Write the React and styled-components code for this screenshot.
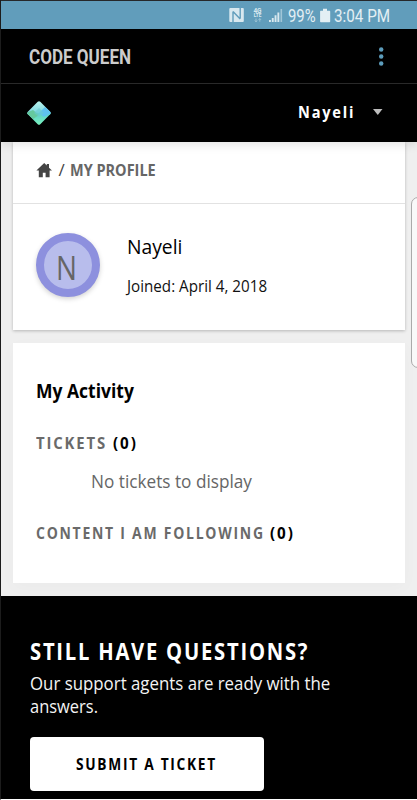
import React from "react";
import styled, { createGlobalStyle } from "styled-components";

const Global = createGlobalStyle`
  * { box-sizing: border-box; }
  body { margin: 0; background: #fff; }
`;

const sans = `"Open Sans", "Noto Sans", sans-serif`;
const roboto = `Roboto, "Liberation Sans", sans-serif`;

/* Single-line text, condensed horizontally by $fit. */
const Label = styled.span`
  display: block;
  flex: none;
  white-space: pre;
  transform-origin: 0 50%;
  transform: scaleX(${(p) => p.$fit || 1});
  font-family: ${(p) => (p.$roboto ? roboto : sans)};
  font-size: ${(p) => p.$size}px;
  font-weight: ${(p) => p.$weight || 400};
  letter-spacing: ${(p) => p.$track || 0}px;
  line-height: ${(p) => p.$line || 24}px;
  height: ${(p) => p.$line || 24}px;
  width: ${(p) => (p.$width ? `${p.$width}px` : "auto")};
  color: ${(p) => p.$color || "#000"};
`;

const Phone = styled.div`
  position: relative;
  display: flex;
  flex-direction: column;
  width: 417px;
  height: 800px;
  overflow: hidden;
  background: #efefef;
  border-left: 1px solid #1c1c1c;
  border-bottom: 1px solid #fff;
`;
const StatusBar = styled.div`
  display: flex;
  height: 29px;
  flex: none;
  background: #619dbb;
  border-top: 1px solid #26282a;
  align-items: center;
  padding: 2px 0 0 228px;
`;
const AppBar = styled.div`
  display: flex;
  flex: none;
  height: 55px;
  background: #000;
  border-bottom: 1px solid #2b2b2b;
  justify-content: space-between;
  align-items: center;
  padding: 3px 33px 0 28px;
`;
const Header = styled.div`
  display: flex;
  flex: none;
  height: 58px;
  background: #000;
  align-items: center;
  padding: 0 34px 0 25px;
  position: relative;
  box-shadow: 0 2px 10px rgba(0, 0, 0, 0.12);
`;
const UserMenu = styled.div`
  display: flex;
  align-items: center;
  margin-left: auto;
  padding-bottom: 2px;
`;
const Content = styled.main`
  display: flex;
  flex-direction: column;
  gap: 13px;
  flex: none;
  height: 454px;
  padding: 0 12px;
`;
const Card = styled.section`
  background: #fff;
  height: ${(p) => p.$h}px;
  flex: none;
  box-shadow: ${(p) => (p.$raised ? "0 1px 3px rgba(0,0,0,.24)" : "0 4px 16px rgba(0,0,0,.025)")};
`;
const Crumbs = styled.nav`
  display: flex;
  height: 62px;
  border-bottom: 1px solid #e2e2e2;
  padding: 16px 0 0 23px;
`;
const HomeIcon = styled.svg`
  margin-top: 4px;
`;
const Profile = styled.div`
  display: flex;
  padding: 29px 0 0 23px;
`;
const Avatar = styled.div`
  width: 64px;
  height: 64px;
  border-radius: 50%;
  border: 8px solid #8d90de;
  background: #b8bdec;
  box-shadow: 0 2px 5px rgba(0, 0, 0, 0.18);
  padding: 4px 0 0 12px;
`;
const ProfileText = styled.div`
  display: flex;
  flex-direction: column;
  padding: 1px 0 0 27px;
  gap: 16px;
`;
const Activity = styled.div`
  display: flex;
  flex-direction: column;
  padding: 36px 0 0 23px;
`;
const Row = styled.div`
  display: flex;
  margin-top: ${(p) => p.$top}px;
  padding-left: ${(p) => p.$indent || 0}px;
`;
const Footer = styled.footer`
  display: flex;
  flex-direction: column;
  align-items: flex-start;
  flex: 1;
  background: #000;
  padding: 41px 0 0 29px;
`;
const Lead = styled.div`
  display: flex;
  flex-direction: column;
  align-items: flex-start;
  margin-top: 6px;
`;
const Submit = styled.button`
  display: flex;
  flex: none;
  align-items: center;
  width: 234px;
  height: 54px;
  margin-top: 20px;
  padding: 0 0 0 46px;
  border: 0;
  border-radius: 4px;
  background: #fff;
`;
const EdgePanel = styled.div`
  position: absolute;
  left: 410px;
  top: 197px;
  width: 20px;
  height: 171px;
  background: #f9f9f9;
  border: 1px solid #aaa;
  border-radius: 7px;
`;

const StatusIcons = () => (
  <svg width="59" height="18" viewBox="229 6 59 18" fill="#d8e8ef">
    <rect x="229.3" y="7" width="14.5" height="14" rx="1" />
    <path d="M233 21V10.500M240.200 7v10.500M233 10.500l7.200 7.500" fill="none" stroke="#619dbb" strokeWidth="1.400" />
    <text x="253.500" y="12" fontSize="6.500" fontWeight="700" fontFamily="Roboto" textLength="8">4G</text>
    <text x="253.800" y="16.400" fontSize="5" fontWeight="700" fontFamily="Roboto" textLength="7.500" lengthAdjust="spacingAndGlyphs">LTE</text>
    <path d="M256 17.500v3.200M254.800 19.500l1.200 1.400 1.200-1.400M259.800 20.700v-3M258.600 18.900l1.200-1.400 1.200 1.400" fill="none" stroke="#a8cbdb" strokeWidth=".8" />
    <path d="M269 19h1.900v2h-1.900zM271.800 17h1.900v4h-1.900zM274.600 14.300h1.900v6.700h-1.900zM277.400 11.500h1.900v9.500h-1.900z" />
    <path d="M280.500 8h1.600v13h-1.600z" fill="#a0c5d7" />
  </svg>
);
const Battery = () => (
  <svg width="15" height="16" viewBox="0 0 15 16" fill="#e3eff4">
    <path d="M4 .8h4v2h2.500a.7.7 0 0 1 .7.7V13.500a.7.7 0 0 1-.7.7H1.800a.7.7 0 0 1-.7-.7V3.500A.7.7 0 0 1 1.800 2.800H4z" />
  </svg>
);
const Dots = () => (
  <svg width="5" height="22" viewBox="0 0 5 22" fill="#5c9cbb">
    <circle cx="2.200" cy="2.500" r="2.200" />
    <circle cx="2.200" cy="9.500" r="2.200" />
    <circle cx="2.200" cy="16.500" r="2.200" />
  </svg>
);
const Gem = () => (
  <svg width="26" height="26" viewBox="0 0 26 26">
    <defs>
      <clipPath id="gem">
        <rect x="4.200" y="4.200" width="17.600" height="17.600" rx="1.800" transform="rotate(45 13 13)" />
      </clipPath>
      <linearGradient id="top" x1="0" y1="0" x2="0" y2="1">
        <stop offset="0" stopColor="#c2faf3" />
        <stop offset="1" stopColor="#6fcfdb" />
      </linearGradient>
      <linearGradient id="bottom" x1="0" y1="0" x2="0" y2="1">
        <stop offset="0" stopColor="#5ccfc8" />
        <stop offset="1" stopColor="#7cf5bd" />
      </linearGradient>
    </defs>
    <g clipPath="url(#gem)">
      <path d="M0 0h26v15H0z" fill="url(#top)" />
      <path d="M0 13h26v13H0z" fill="url(#bottom)" />
      <path d="M19 7 13 13l5 4 9-5z" fill="#5fc2f0" />
      <path d="M0 13 7 10l6 5L7 19z" fill="#65c99e" />
      <path d="m13 8 5 5-5 4-5-4z" fill="#6accd0" opacity=".6" />
    </g>
  </svg>
);
const Home = () => (
  <HomeIcon width="18" height="17" viewBox="0 0 18 17" fill="#444">
    <path d="M8.200 1 .4 8.600h2.400v6.600h4V10.800h2.800v4.400h4V8.600H16L13 5.700V2h-2.200v1.500z" />
  </HomeIcon>
);
const Caret = () => (
  <svg width="10" height="7" viewBox="0 0 10 7" fill="#bdbdbd">
    <path d="M0 0h9.500L4.800 6z" />
  </svg>
);

export default function App() {
  return (
    <>
      <Global />
      <Phone>
        <StatusBar>
          <StatusIcons />
          <Label $roboto $size={17.5} $width={31} $fit={0.85} $color="#e3eff4">99%</Label>
          <Battery />
          <Label $roboto $size={17.5} $fit={0.87} $color="#e3eff4">3:04 PM</Label>
        </StatusBar>
        <AppBar>
          <Label $roboto $size={19.5} $weight={700} $fit={0.875} $color="#ccc">CODE QUEEN</Label>
          <Dots />
        </AppBar>
        <Header>
          <Gem />
          <UserMenu>
            <Label $size={16} $weight={700} $track={2} $fit={0.91} $color="#fff" $width={75}>Nayeli</Label>
            <Caret />
          </UserMenu>
        </Header>
        <Content>
          <Card $raised $h={188}>
            <Crumbs>
              <Home />
              <Label $size={17} $weight={500} $color="#444" $width={15.5}>{" / "}</Label>
              <Label $size={16.5} $weight={700} $fit={0.878} $color="#666">MY PROFILE</Label>
            </Crumbs>
            <Profile>
              <Avatar>
                <Label $size={32} $fit={0.87} $line={46} $color="#666">N</Label>
              </Avatar>
              <ProfileText>
                <Label $size={20.5} $fit={0.94}>Nayeli</Label>
                <Label $size={16.5} $fit={0.92} $color="#111">Joined: April 4, 2018</Label>
              </ProfileText>
            </Profile>
          </Card>
          <Card $h={240}>
            <Activity>
              <Label $size={20} $weight={700} $fit={0.875}>My Activity</Label>
              <Row $top={28}>
                <Label $size={16} $weight={700} $track={2} $fit={0.93} $color="#6a6a6a" $width={76.5}>TICKETS</Label>
                <Label $size={16} $weight={700} $track={2} $fit={0.95}>(0)</Label>
              </Row>
              <Row $top={14} $indent={55}>
                <Label $size={19} $fit={0.905} $color="#666">No tickets to display</Label>
              </Row>
              <Row $top={28}>
                <Label $size={16} $weight={700} $track={2} $fit={0.873} $color="#6a6a6a" $width={234}>CONTENT I AM FOLLOWING</Label>
                <Label $size={16} $weight={700} $track={2} $fit={0.95}>(0)</Label>
              </Row>
            </Activity>
          </Card>
        </Content>
        <Footer>
          <Label $size={23} $weight={700} $track={2} $fit={0.879} $line={28} $color="#fff">STILL HAVE QUESTIONS?</Label>
          <Lead>
            <Label $size={18.5} $line={23} $fit={0.91} $color="#f4f4f4">Our support agents are ready with the</Label>
            <Label $size={18.5} $line={23} $fit={0.89} $color="#f4f4f4">answers.</Label>
          </Lead>
          <Submit>
            <Label $size={16} $weight={700} $track={2} $fit={0.858}>SUBMIT A TICKET</Label>
          </Submit>
        </Footer>
        <EdgePanel />
      </Phone>
    </>
  );
}
